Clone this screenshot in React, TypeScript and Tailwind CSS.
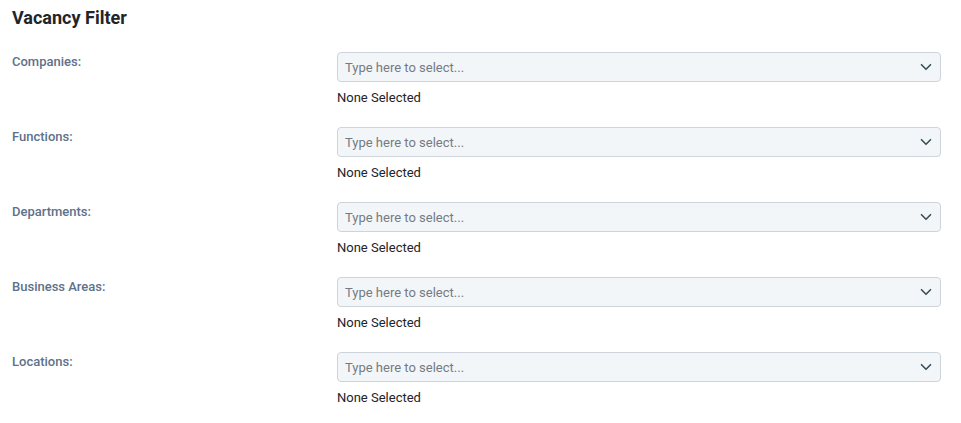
import { ChevronDown } from 'lucide-react';

const filters = ['Companies:', 'Functions:', 'Departments:', 'Business Areas:', 'Locations:'];

const FilterRow = ({ label }: { label: string }) => (
  <div className="grid grid-cols-[325px_1fr] h-[75px]">
    <label className="pt-[1px] text-[13px] leading-[18px] font-medium text-[#5e7189]">{label}</label>
    <div>
      <div className="flex items-center h-[30px] rounded-[4px] border border-[#cdd4db] bg-[#f3f6f9] pl-[7px] pr-[5px]">
        <span className="flex-1 pt-[1px] text-[13px] text-[#747b82]">Type here to select...</span>
        <ChevronDown className="h-[18px] w-[18px] text-[#3b4f59]" strokeWidth={2.2} />
      </div>
      <p className="mt-[7px] text-[13px] leading-[18px] text-[#212529]">None Selected</p>
    </div>
  </div>
);

export default function App() {
  return (
    <div className="min-h-screen bg-white pl-[12px] pr-[20px] pt-[7px]" style={{ fontFamily: 'Roboto, "Liberation Sans", sans-serif' }}>
      <h2 className="text-[18px] leading-[22px] font-bold text-[#212529] mb-[23px]">Vacancy Filter</h2>
      {filters.map((f) => (
        <FilterRow key={f} label={f} />
      ))}
    </div>
  );
}
